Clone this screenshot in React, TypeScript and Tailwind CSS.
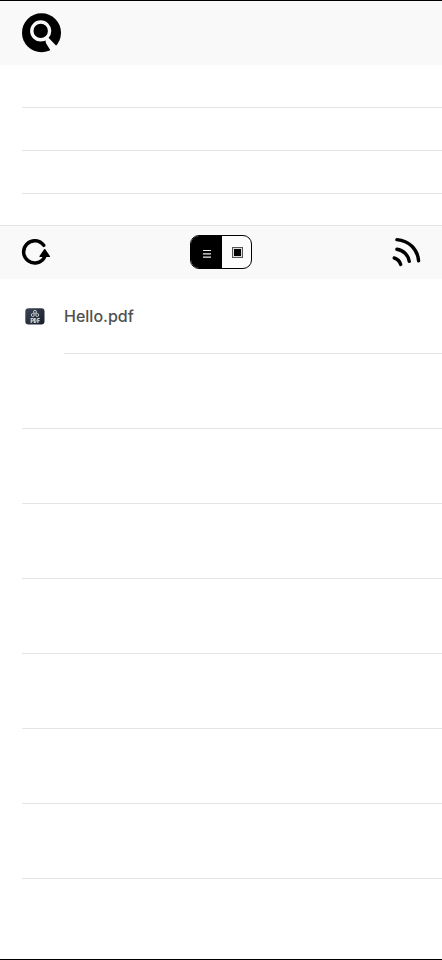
import { useState } from "react";

interface IFile {
  name: string;
}

type View = "list" | "grid";

const files: IFile[] = [{ name: "Hello.pdf" }];

const SearchIcon = () => (
  <svg width="40" height="40" viewBox="0 0 40 40" fill="none">
    <circle cx="19.5" cy="19.7" r="19.5" fill="#000" />
    <circle cx="18.7" cy="17.9" r="8.9" stroke="#f9f9f9" strokeWidth="3.4" />
    <path d="M23 25.5 25.2 23.8 28 26.2 34.2 32.7 36.5 35 31 40 28.7 37.7 24 30.2Z" fill="#f9f9f9" />
  </svg>
);

const RefreshIcon = () => (
  <svg width="28" height="28" viewBox="0 0 28 28" fill="none" className="overflow-visible">
    <path
      d="M21.7 7.3A11.1 11.1 0 1 0 22.4 19.3"
      stroke="#000"
      strokeWidth="3.5"
      strokeLinecap="round"
    />
    <path
      d="M22.7 11.7 27.3 18.4H18.1Z"
      fill="#000"
      stroke="#000"
      strokeWidth="1.4"
      strokeLinejoin="round"
    />
  </svg>
);

const FeedIcon = () => (
  <svg
    width="28"
    height="28"
    viewBox="0 0 28 28"
    fill="none"
    stroke="#000"
    strokeWidth="3.4"
    strokeLinecap="round"
    className="overflow-visible"
  >
    <path d="M4.9 1.6C17.2 2.6 25.6 11.2 26.6 22.8" />
    <path d="M4.9 11.3C11.3 12.1 16.3 17 17.3 23.4" />
    <path d="M2.2 20C5.2 20.9 7.8 23.4 8.7 26.4" />
  </svg>
);

const ListIcon = () => (
  <svg width="10" height="10" viewBox="0 0 10 10" stroke="#eee" strokeWidth="1.2">
    <path d="M1 1.5H9M1 4.8H9M1 8.1H9" />
  </svg>
);

const GridIcon = () => (
  <svg width="11" height="11" viewBox="0 0 11 11">
    <rect x="0.5" y="0.5" width="10" height="10" fill="#ddd" stroke="#555" />
    <rect x="2" y="2" width="7" height="7" fill="#000" />
  </svg>
);

const PdfIcon = () => (
  <svg width="20" height="17" viewBox="0 0 20 17" fill="none">
    <defs>
      <linearGradient id="pdf-bg" x1="0" y1="0" x2="1" y2="1">
        <stop offset="0" stopColor="#3c4655" />
        <stop offset="1" stopColor="#161e29" />
      </linearGradient>
    </defs>
    <rect x="0.3" y="0.3" width="19.2" height="16.2" rx="3.2" fill="url(#pdf-bg)" />
    <g stroke="#d5d8dc" strokeWidth="0.9">
      <circle cx="10" cy="3.9" r="1.5" />
      <circle cx="7.8" cy="7" r="1.5" />
      <circle cx="12.2" cy="7" r="1.5" />
    </g>
    <g stroke="#d5d8dc" strokeWidth="1.1">
      <path d="M6.2 15V10.5H7.2A1.2 1.2 0 0 1 7.2 13H6.2" />
      <path d="M9.3 10.5V14.5H9.8A1.3 2 0 0 0 9.8 10.5Z" />
      <path d="M12.8 15V10.5H14.8M12.8 12.6H14.5" />
    </g>
  </svg>
);

const App = () => {
  const [view, setView] = useState<View>("list");

  return (
    <div className="flex min-h-screen flex-col border-y border-black bg-white font-['Inter',sans-serif]">
      <header className="flex h-16 items-center bg-[#f9f9f9] px-[22px]">
        <button type="button" aria-label="Search">
          <SearchIcon />
        </button>
      </header>

      <ul className="pb-[31px] pl-[22px]">
        {[0, 1, 2].map((row) => (
          <li key={row} className="h-[43px] border-b border-[#e4e4e4]" />
        ))}
      </ul>

      <div className="grid h-[54px] grid-cols-3 items-center border-t border-[#e4e4e4] bg-[#f9f9f9] px-[22px] pb-0.5">
        <button type="button" aria-label="Refresh" className="justify-self-start">
          <RefreshIcon />
        </button>
        <div
          role="radiogroup"
          aria-label="View"
          className="flex h-[34px] w-[62px] justify-self-center overflow-hidden rounded-[9px] border border-black bg-[#fcfcfc]"
        >
          <label className="flex w-[31px] items-center justify-center pt-1 pl-0.5 has-checked:bg-black">
            <input
              type="radio"
              name="view"
              aria-label="List"
              className="sr-only"
              checked={view === "list"}
              onChange={() => setView("list")}
            />
            <ListIcon />
          </label>
          <label className="flex flex-1 items-center justify-center pt-px pl-0.5 has-checked:bg-black">
            <input
              type="radio"
              name="view"
              aria-label="Grid"
              className="sr-only"
              checked={view === "grid"}
              onChange={() => setView("grid")}
            />
            <GridIcon />
          </label>
        </div>
        <button type="button" aria-label="Feed" className="justify-self-end">
          <FeedIcon />
        </button>
      </div>

      <ul className="flex-1 pl-[22px]">
        {files.map((file) => (
          <li key={file.name} className="flex h-[75px] gap-[19px] pl-[3px]">
            <span className="flex items-center">
              <PdfIcon />
            </span>
            <span className="flex flex-1 items-center border-b border-[#e4e4e4] text-base font-medium text-[#505050]">
              {file.name}
            </span>
          </li>
        ))}
        {[0, 1, 2, 3, 4, 5, 6].map((row) => (
          <li key={row} className="h-[75px] border-b border-[#e4e4e4]" />
        ))}
      </ul>
    </div>
  );
};

export default App;
